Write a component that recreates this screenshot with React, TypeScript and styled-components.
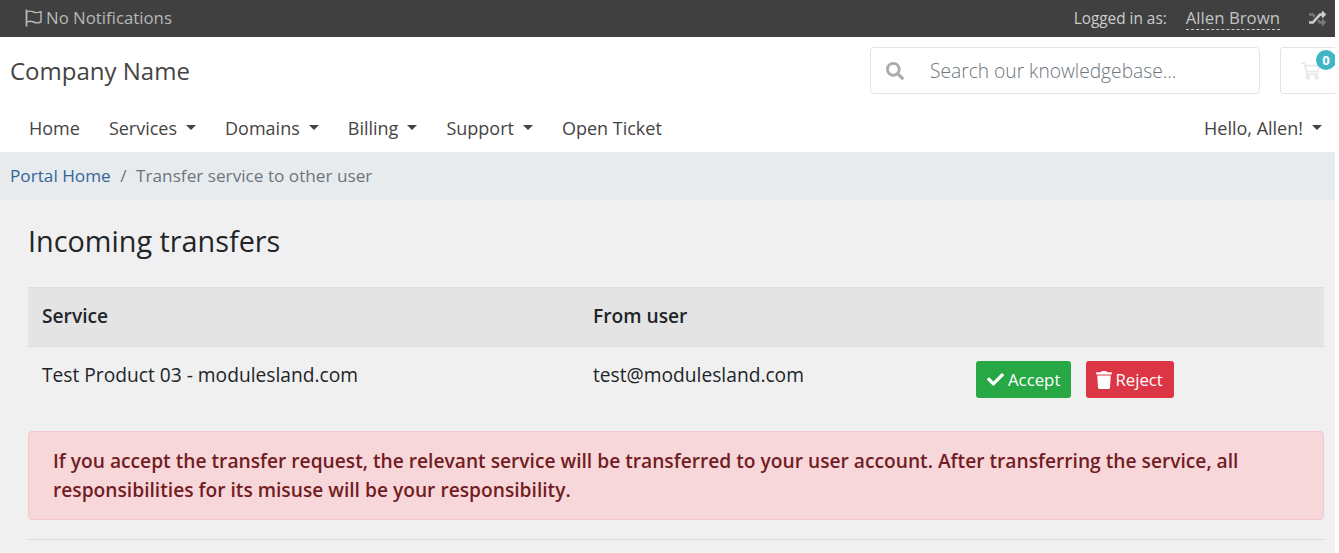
import React from "react";
import styled, { createGlobalStyle } from "styled-components";

const Global = createGlobalStyle`
  html, body { margin: 0; padding: 0; background: #fff; }
  body { font-family: "Open Sans", sans-serif; font-size: 19.2px; line-height: 29px; color: #212529; overflow: hidden; }
  * { box-sizing: border-box; }
`;
const Page = styled.div`width: 1335px; height: 553px; overflow: hidden; background: #f0f0f0;`;
const TopBar = styled.div`
  height: 37px; background: #404040; display: flex; align-items: center; justify-content: space-between;
  padding: 0 8px 2px 25px; font-size: 16.8px; color: #bbb;
`;
const Notif = styled.div`display: flex; align-items: center; gap: 3px; color: #b8b8b8;`;
const UserBox = styled.div`display: flex; align-items: center; padding-top: 2px;`;
const LoggedLabel = styled.span`font-size: 15.36px; color: #ccc; margin-right: 19px;`;
const UserName = styled.span`font-size: 16.8px; color: #c4c4c4; line-height: 22px; margin-right: 28px; border-bottom: 1px dashed #ccc;`;
const Header = styled.div`height: 69px; background: #fff; display: flex; justify-content: space-between; padding: 10px 0 0 10px;`;
const Logo = styled.div`font-size: 24px; line-height: 48px; color: #444;`;
const HeaderRight = styled.div`display: flex; align-items: flex-start;`;
const Search = styled.div`
  width: 390px; height: 47px; border: 1px solid #e4e4e4; border-radius: 4px; display: flex; align-items: center;
  padding-left: 15px; margin-right: 20px;
`;
const Placeholder = styled.span`font-size: 19.2px; font-weight: 300; color: #6c757d; margin-left: 26px;`;
const Cart = styled.div`
  position: relative; width: 55px; height: 47px; border: 1px solid #e4e4e4; border-right: 0; border-radius: 4px 0 0 4px;
  display: flex; align-items: center; padding-left: 20px;
`;
const Badge = styled.span`
  position: absolute; top: 2px; right: -1px; width: 20px; height: 20px; border-radius: 50%; background: #3fb5c6; color: #fff;
  font-size: 13px; font-weight: 700; line-height: 20px; text-align: center;
`;
const Nav = styled.nav`height: 46px; padding: 0 13px 1px 10px; background: #fff; display: flex; justify-content: space-between; align-items: center; font-size: 18px; color: #444;`;
const NavList = styled.div`display: flex; align-items: center; gap: 29px; padding-left: 19px;`;
const NavItem = styled.div`display: flex; align-items: center; white-space: nowrap;`;
const Caret = styled.span`
  width: 0; height: 0; margin-left: 9px; margin-top: -2px; border-top: 5px solid #444;
  border-left: 5px solid transparent; border-right: 5px solid transparent;
`;
const Breadcrumb = styled.div`height: 48px; padding-bottom: 1px; background: #e7ebee; display: flex; align-items: center; padding-left: 10px; font-size: 17.2px; color: #6c757d;`;
const CrumbLink = styled.span`color: #336699;`;
const Sep = styled.span`padding: 0 9.5px;`;
const Main = styled.main`padding: 23px 11px 0 28px;`;
const Title = styled.h1`margin: 0 0 28px; font-size: 28.8px; font-weight: 400; line-height: 36px; color: #212529;`;
const HeadRow = styled.div`
  display: grid; grid-template-columns: 551px 383px 1fr; height: 60px; align-items: center; padding-left: 14px; padding-bottom: 4px;
  background: #e4e4e4; border-top: 1px solid #dedede; border-bottom: 1px solid #dedede; font-weight: 600;
`;
const BodyRow = styled.div`display: grid; grid-template-columns: 551px 383px 1fr; padding: 13px 0 0 14px; height: 84px;`;
const Actions = styled.div`display: flex; gap: 15px; margin-top: 1px; align-items: flex-start;`;
const Button = styled.button<{ $bg: string }>`
  display: flex; align-items: center; gap: 3px; height: 37px; padding: 0 11px 0 10px; border: 0; border-radius: 3px;
  background: ${(p) => p.$bg}; color: #fff; font: 400 16.8px "Open Sans", sans-serif;
`;
const Alert = styled.div`
  background: #f8d7da; border: 1px solid #f5c6cb; border-radius: 4px; padding: 14px 24px; color: #721c24; font-weight: 600;
  line-height: 29px; height: 89px;
`;
const Rule = styled.hr`margin: 19px 0 0; border: 0; border-top: 1px solid #dcdcdc;`;

const Flag = () => (
  <svg width="18" height="18" viewBox="0 0 18 18" fill="none" stroke="#b8b8b8" strokeWidth="1.4">
    <path d="M1.5 0.5v17" strokeWidth="1.8" />
    <path d="M1.5 3c3-1.4 5-1 7 0s4 1 7.5-.4V13c-3.500 1.400-5.500 1-7.500 0s-4-1.200-7 .2" strokeLinejoin="round" />
  </svg>
);
const Shuffle = () => (
  <svg width="19" height="17" viewBox="0 0 512 512">
    <path fill="#777" d="M504.971 359.029c9.373 9.373 9.373 24.569 0 33.941l-80 79.984c-15.01 15.01-40.971 4.49-40.971-16.971V416h-58.785a12.004 12.004 0 0 1-8.773-3.812l-70.556-75.596 53.333-57.143L352 336h32v-39.981c0-21.438 25.943-31.998 40.971-16.971l80 79.981zM12 176h84l52.781 56.551 53.333-57.143-70.556-75.596A11.999 11.999 0 0 0 122.785 96H12c-6.627 0-12 5.373-12 12v56c0 6.627 5.373 12 12 12z" />
    <path fill="#ccc" d="M384 176v39.984c0 21.46 25.961 31.98 40.971 16.971l80-79.984c9.373-9.373 9.373-24.569 0-33.941l-80-79.981C409.943 24.021 384 34.582 384 56.019V96h-58.785a12.004 12.004 0 0 0-8.773 3.812L96 336H12c-6.627 0-12 5.373-12 12v56c0 6.627 5.373 12 12 12h110.785c3.326 0 6.503-1.381 8.773-3.812L352 176h32z" />
  </svg>
);
const SearchIcon = () => (
  <svg width="18" height="18" viewBox="0 0 512 512" fill="#aaa">
    <path d="M505 442.7L405.3 343c-4.5-4.5-10.6-7-17-7H372c27.6-35.3 44-79.7 44-128C416 93.1 322.9 0 208 0S0 93.1 0 208s93.1 208 208 208c48.3 0 92.7-16.4 128-44v16.3c0 6.4 2.5 12.5 7 17l99.7 99.7c9.4 9.4 24.6 9.4 33.9 0l28.3-28.3c9.4-9.4 9.4-24.6.1-34zM208 336c-70.7 0-128-57.2-128-128 0-70.7 57.2-128 128-128 70.7 0 128 57.2 128 128 0 70.7-57.2 128-128 128z" />
  </svg>
);
const CartIcon = () => (
  <svg width="20" height="18" viewBox="0 0 20 18" fill="none" stroke="#e8e8e8" strokeWidth="1.6">
    <path d="M0 1.2h3.4L6 12.4h11" />
    <path d="M4 3.6h14.4l-1.600 6H5.400" />
    <circle cx="7" cy="15.4" r="1.5" />
    <circle cx="15.6" cy="15.4" r="1.5" />
  </svg>
);
const Check = () => (
  <svg width="19" height="17" viewBox="0 0 512 512" fill="#fff">
    <path d="M173.898 439.404l-166.4-166.4c-9.997-9.997-9.997-26.206 0-36.204l36.203-36.204c9.997-9.998 26.207-9.998 36.204 0L192 312.69 432.095 72.596c9.997-9.997 26.207-9.997 36.204 0l36.203 36.204c9.997 9.997 9.997 26.206 0 36.204l-294.4 294.401c-9.998 9.997-26.207 9.997-36.204-.001z" />
  </svg>
);
const Trash = () => (
  <svg width="16" height="18" viewBox="0 0 448 512" fill="#fff">
    <path d="M432 32H312l-9.4-18.7A24 24 0 0 0 281.1 0H166.8a23.72 23.72 0 0 0-21.4 13.3L136 32H16A16 16 0 0 0 0 48v32a16 16 0 0 0 16 16h416a16 16 0 0 0 16-16V48a16 16 0 0 0-16-16zM53.2 467a48 48 0 0 0 47.9 45h245.8a48 48 0 0 0 47.9-45L416 128H32z" />
  </svg>
);

export default function App() {
  return (
    <Page>
      <Global />
      <TopBar>
        <Notif><Flag />No Notifications</Notif>
        <UserBox>
          <LoggedLabel>Logged in as:</LoggedLabel>
          <UserName>Allen Brown</UserName>
          <Shuffle />
        </UserBox>
      </TopBar>
      <Header>
        <Logo>Company Name</Logo>
        <HeaderRight>
          <Search><SearchIcon /><Placeholder>Search our knowledgebase...</Placeholder></Search>
          <Cart><CartIcon /><Badge>0</Badge></Cart>
        </HeaderRight>
      </Header>
      <Nav>
        <NavList>
          <NavItem>Home</NavItem>
          <NavItem>Services<Caret /></NavItem>
          <NavItem>Domains<Caret /></NavItem>
          <NavItem>Billing<Caret /></NavItem>
          <NavItem>Support<Caret /></NavItem>
          <NavItem>Open Ticket</NavItem>
        </NavList>
        <NavItem>Hello, Allen!<Caret /></NavItem>
      </Nav>
      <Breadcrumb>
        <CrumbLink>Portal Home</CrumbLink><Sep>/</Sep>Transfer service to other user
      </Breadcrumb>
      <Main>
        <Title>Incoming transfers</Title>
        <HeadRow><div>Service</div><div>From user</div><div /></HeadRow>
        <BodyRow>
          <div>Test Product 03 - modulesland.com</div>
          <div>test@modulesland.com</div>
          <Actions>
            <Button $bg="#28a745"><Check />Accept</Button>
            <Button $bg="#dc3545"><Trash />Reject</Button>
          </Actions>
        </BodyRow>
        <Alert>If you accept the transfer request, the relevant service will be transferred to your user account. After transferring the service, all responsibilities for its misuse will be your responsibility.</Alert>
        <Rule />
      </Main>
    </Page>
  );
}
